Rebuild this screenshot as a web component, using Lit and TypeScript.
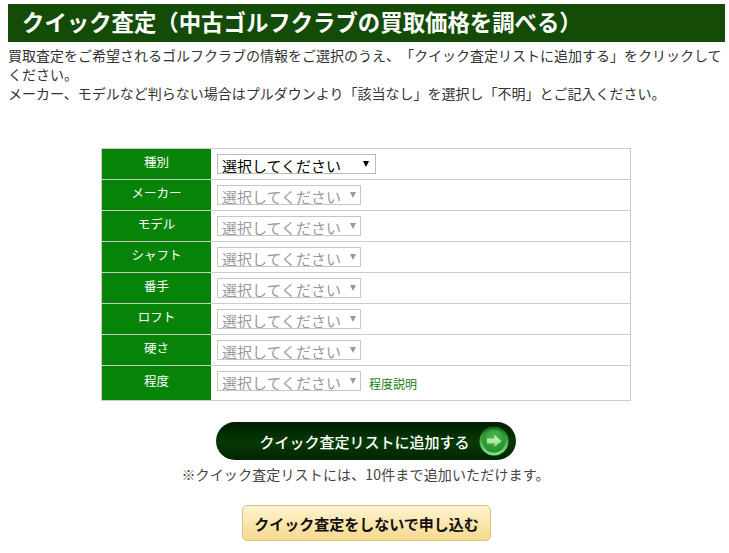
import { LitElement, html, css } from 'lit';
import { customElement } from 'lit/decorators.js';

const ROWS = ['種別', 'メーカー', 'モデル', 'シャフト', '番手', 'ロフト', '硬さ', '程度'];

@customElement('app-root')
export class AppRoot extends LitElement {
  static styles = css`
    :host {
      display: block;
      width: 729px;
      font-family: 'Noto Sans CJK JP', 'Noto Sans', sans-serif;
      color: #333;
      background: #fff;
      text-spacing-trim: space-all;
    }
    * {
      box-sizing: border-box;
    }
    .page {
      padding: 4px 4px 12px 8px;
    }
    h1 {
      margin: 0;
      height: 38px;
      padding-left: 14px;
      background: #134b07;
      color: #fff;
      font-size: 22.4px;
      line-height: 35px;
      font-weight: 700;
      white-space: nowrap;
    }
    .lead {
      margin: 4px 0 0;
      font-size: 14px;
      line-height: 19px;
    }
    .form {
      display: grid;
      grid-template-columns: 109px 419px;
      width: 530px;
      margin: 45px 0 0 93px;
      border: solid #ccc;
      border-width: 1px 1px 0 1px;
    }
    .label,
    .field {
      height: 31px;
      border-bottom: 1px solid #ccc;
    }
    .label {
      background: #078307;
      color: #fff;
      font-size: 12.5px;
      line-height: 26px;
      text-align: center;
    }
    .label.tall,
    .field.tall {
      height: 35px;
    }
    .label.tall {
      line-height: 29px;
    }
    .field {
      display: flex;
      align-items: flex-start;
      gap: 8px;
      padding: 5px 0 0 6px;
    }
    .select {
      position: relative;
      display: block;
      width: 144px;
      height: 20px;
      border: 1px solid #c6c6c6;
      overflow: hidden;
    }
    .select.active {
      width: 159px;
      border-color: #bbb;
    }
    select {
      appearance: none;
      display: block;
      width: 100%;
      height: 26px;
      margin: -2px 0 0;
      padding: 0 0 0 4px;
      border: 0;
      background: #fff;
      color: #000;
      font: inherit;
      font-size: 15px;
      line-height: 26px;
    }
    select:disabled {
      color: #999;
      opacity: 1;
    }
    .select::after {
      content: '';
      position: absolute;
      top: 6px;
      right: 4px;
      border: solid transparent;
      border-width: 6px 3.5px 0;
      border-top-color: #999;
    }
    .select.active::after {
      right: 6px;
      border-top-color: #000;
    }
    .help {
      margin-top: 4px;
      color: #177d17;
      font-size: 12px;
      line-height: 18px;
      text-decoration: none;
    }
    .actions {
      display: flex;
      flex-direction: column;
      align-items: center;
      margin-left: -2px;
    }
    .add {
      display: flex;
      align-items: center;
      justify-content: flex-end;
      gap: 9px;
      width: 300px;
      height: 38px;
      margin-top: 21px;
      padding: 0 7px 0 0;
      border: 0;
      border-radius: 19px;
      background: linear-gradient(#011c01, #053a05 55%, #012501);
      color: #fff;
      font: inherit;
      font-size: 15px;
      font-weight: 500;
      white-space: nowrap;
    }
    .add svg {
      display: block;
      flex: none;
    }
    .note {
      margin: 4px 0 0;
      color: #444;
      font-size: 14px;
      line-height: 20px;
      letter-spacing: 0.15px;
    }
    .skip {
      width: 249px;
      height: 36px;
      margin: 21px 0 0 2px;
      padding: 0;
      border: 1px solid #d8c283;
      border-radius: 5px;
      background: linear-gradient(#fff3cf, #f6d98e);
      color: #111;
      font: inherit;
      font-size: 15px;
      font-weight: 700;
    }
  `;

  render() {
    return html`
      <div class="page">
        <h1>クイック査定（中古ゴルフクラブの買取価格を調べる）</h1>
        <p class="lead">
          買取査定をご希望されるゴルフクラブの情報をご選択のうえ、「クイック査定リストに追加する」をクリックしてください。<br />
          メーカー、モデルなど判らない場合はプルダウンより「該当なし」を選択し「不明」とご記入ください。
        </p>
        <div class="form">
          ${ROWS.map((name, i) => {
            const last = i === ROWS.length - 1;
            return html`
              <div class="label ${last ? 'tall' : ''}">${name}</div>
              <div class="field ${last ? 'tall' : ''}">
                <span class="select ${i === 0 ? 'active' : ''}">
                  <select ?disabled=${i !== 0}>
                    <option>選択してください</option>
                  </select>
                </span>
                ${last ? html`<a class="help" href="#">程度説明</a>` : null}
              </div>
            `;
          })}
        </div>
        <div class="actions">
          <button class="add">
            クイック査定リストに追加する
            <svg width="30" height="30" viewBox="0 0 30 30">
              <defs>
                <linearGradient id="ring" x1="0" y1="0" x2="0" y2="1">
                  <stop offset="0" stop-color="#0d6a18" />
                  <stop offset="1" stop-color="#86e886" />
                </linearGradient>
                <radialGradient id="disc" cx="0.5" cy="0.35" r="0.7">
                  <stop offset="0" stop-color="#4cbb4c" />
                  <stop offset="1" stop-color="#1f8a2c" />
                </radialGradient>
                <linearGradient id="arrow" x1="0" y1="0" x2="0" y2="1">
                  <stop offset="0" stop-color="#d4f5c0" />
                  <stop offset="1" stop-color="#8fdc80" />
                </linearGradient>
              </defs>
              <circle cx="15" cy="15" r="14.5" fill="url(#ring)" />
              <circle cx="15" cy="15" r="11.5" fill="url(#disc)" />
              <path d="M8 12.5h7.5V9l7 6-7 6v-3.5H8z" fill="url(#arrow)" />
            </svg>
          </button>
          <p class="note">※クイック査定リストには、10件まで追加いただけます。</p>
          <button class="skip">クイック査定をしないで申し込む</button>
        </div>
      </div>
    `;
  }
}
